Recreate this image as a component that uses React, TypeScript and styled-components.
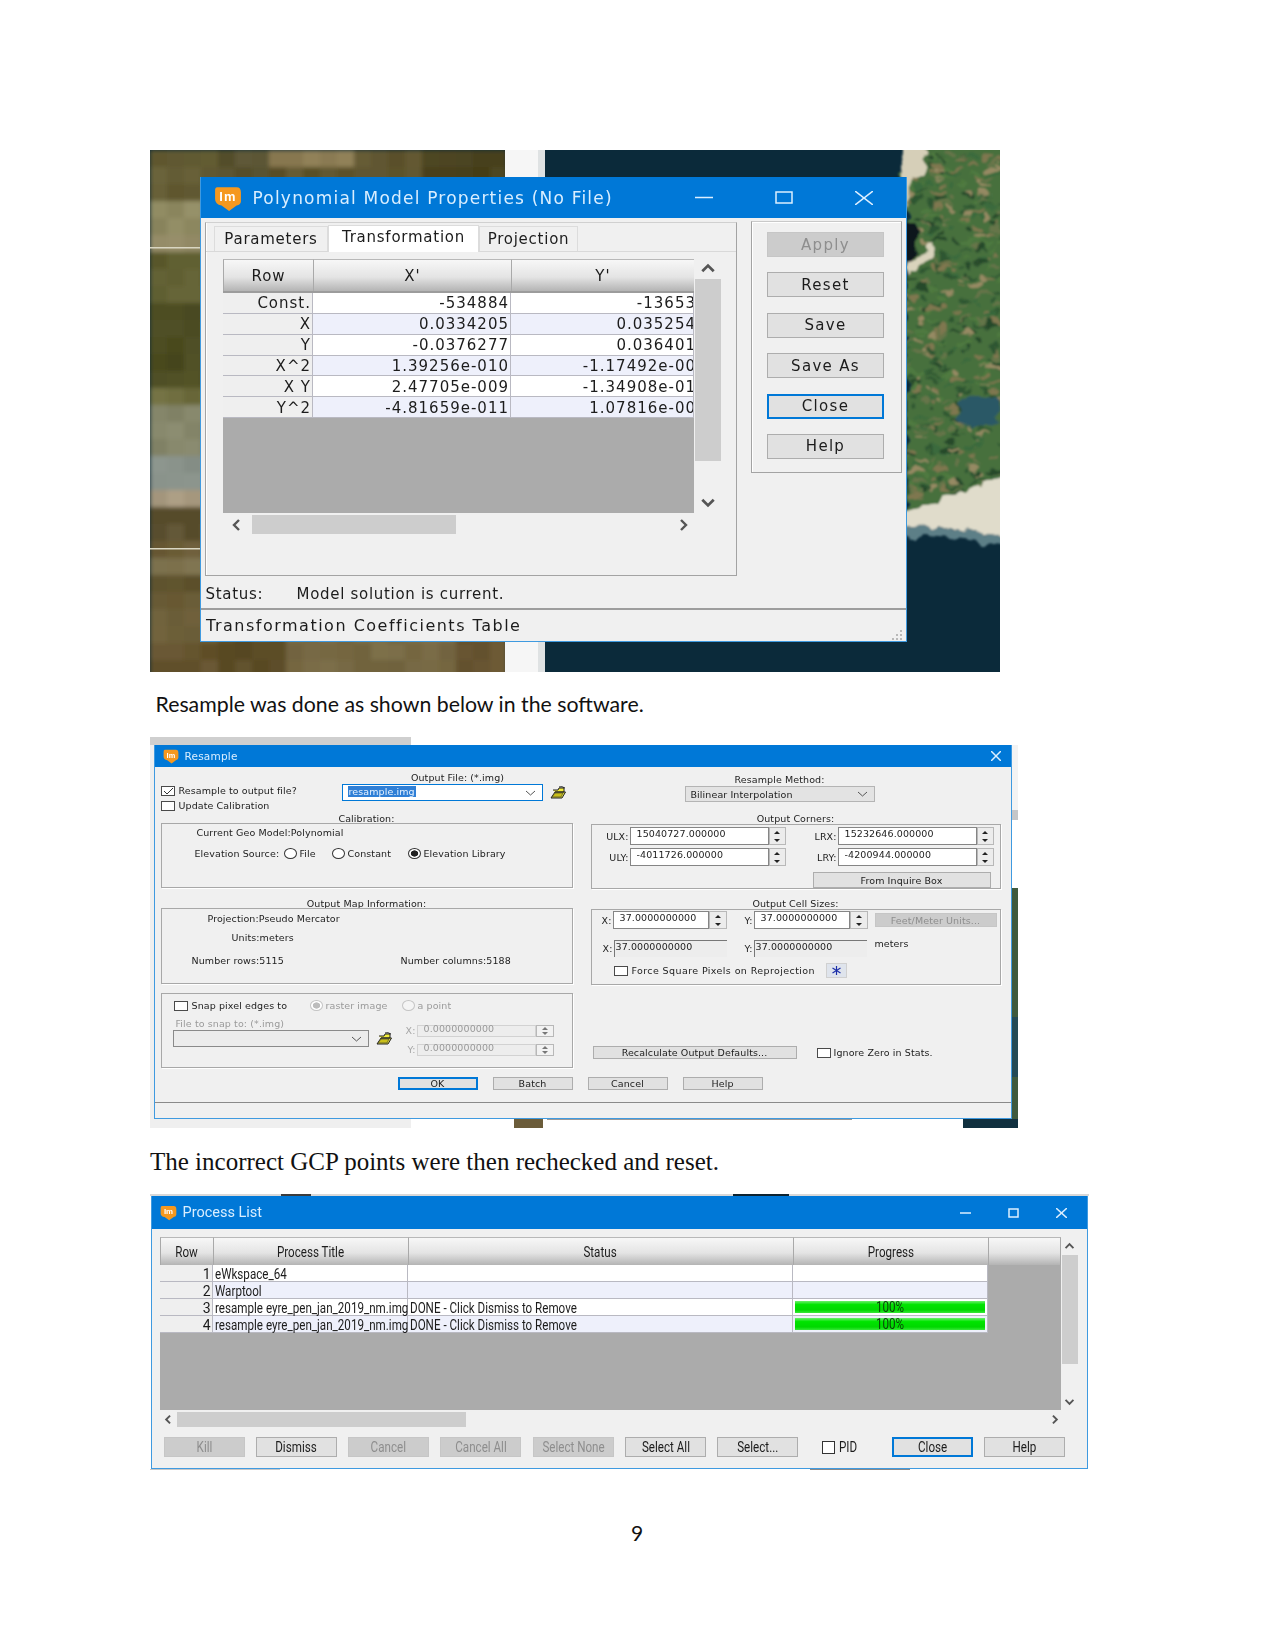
import React from 'react';
import styled, { createGlobalStyle, css } from 'styled-components';

const GlobalStyle = createGlobalStyle`
  html, body {
    margin: 0;
    padding: 0;
    background: #fff;
  }
  * {
    box-sizing: border-box;
  }
`;

const TITLE_BLUE = '#0078d7';
const FACE = '#f0f0f0';
const GRID_GRAY = '#ababab';
const THUMB = '#cdcdcd';
const ALT_ROW = '#eef0fb';

/* ---------- little drawings ---------- */

const ImLogo = ({ size }: { size: number }) => (
  <svg width={size} height={size} viewBox="0 0 26 26" style={{ flex: 'none' }}>
    <path d="M3 3 H21 Q25 3 25 8 V16 Q25 19 21 20 L14 25 L7 20 Q1 19 1 14 V6 Q1 3 3 3 Z" fill="#f5981f" />
    <text x="13" y="16" textAnchor="middle" fontFamily="'Liberation Sans', sans-serif" fontSize="12" fontWeight="700" fill="#fff">
      Im
    </text>
  </svg>
);

const WinGlyph = ({ kind, w, h }: { kind: 'min' | 'max' | 'close'; w: number; h: number }) => (
  <svg width={w} height={h} viewBox={`0 0 ${w} ${h}`} fill="none" stroke="#dcefff" strokeWidth="1.5">
    {kind === 'min' && <line x1="0" y1={h / 2} x2={w} y2={h / 2} />}
    {kind === 'max' && <rect x="1" y="1" width={w - 2} height={h - 2} />}
    {kind === 'close' && (
      <>
        <line x1="0" y1="0" x2={w} y2={h} />
        <line x1={w} y1="0" x2="0" y2={h} />
      </>
    )}
  </svg>
);

const Chevron = ({ dir, size = 14 }: { dir: 'up' | 'down' | 'left' | 'right'; size?: number }) => {
  const points = {
    up: '2,9 7,4 12,9',
    down: '2,5 7,10 12,5',
    left: '9,2 4,7 9,12',
    right: '5,2 10,7 5,12',
  }[dir];
  return (
    <svg width={size} height={size} viewBox="0 0 14 14" fill="none" stroke="#555" strokeWidth="2.4">
      <polyline points={points} />
    </svg>
  );
};

const Caret = ({ color = '#555' }: { color?: string }) => (
  <svg width="11" height="6" viewBox="0 0 11 6" fill="none" stroke={color} strokeWidth="1">
    <polyline points="1,1 5.5,5 10,1" />
  </svg>
);

const Folder = () => (
  <svg width="16" height="13" viewBox="0 0 16 13" style={{ flex: 'none' }}>
    <path d="M3 4 H8 L9 2 H14 V6 H5 L1 12 H12 L15.5 6 H5" fill="#f4ee3a" stroke="#222" strokeWidth="1" />
    <path d="M2 11 L5 7 H13 L11 11 Z" fill="#c9bf1a" stroke="#333" strokeWidth="0.6" />
    <path d="M9 1 Q12 0 15 2" fill="none" stroke="#222" strokeWidth="1" />
  </svg>
);

const Star = () => (
  <svg width="11" height="11" viewBox="0 0 11 11" stroke="#1c2fa8" strokeWidth="1.2">
    <line x1="5.5" y1="1" x2="5.5" y2="10" />
    <line x1="1.5" y1="3" x2="9.5" y2="8" />
    <line x1="9.5" y1="3" x2="1.5" y2="8" />
  </svg>
);

const Grip = () => (
  <svg width="14" height="12" viewBox="0 0 14 12" fill="#b9b9b9">
    <rect x="10" y="1" width="2" height="2" />
    <rect x="6" y="5" width="2" height="2" />
    <rect x="10" y="5" width="2" height="2" />
    <rect x="2" y="9" width="2" height="2" />
    <rect x="6" y="9" width="2" height="2" />
    <rect x="10" y="9" width="2" height="2" />
  </svg>
);

/* ---------- satellite pictures behind the windows ---------- */

const rng = (seed: number) => () => {
  seed = (seed * 16807) % 2147483647;
  return seed / 2147483647;
};

const LEFT_BANDS: [number, string][] = [
  [40, '#655e36'], [75, '#8f8a62'], [100, '#938a66'], [150, '#5f5e30'], [230, '#4c4c22'],
  [250, '#6e6d3e'], [290, '#85866a'], [325, '#89928a'], [350, '#a89a80'], [375, '#5d5232'],
  [395, '#6a5b36'], [420, '#7f7450'], [440, '#5c4f2a'], [490, '#6c5e38'], [522, '#64532e'],
];

const shade = (hex: string, d: number) => {
  const n = parseInt(hex.slice(1), 16);
  const c = (v: number) => Math.max(0, Math.min(255, v + d));
  return `rgb(${c(n >> 16)},${c((n >> 8) & 255)},${c(n & 255)})`;
};

const Mosaic = () => {
  const r = rng(77);
  const cells: React.ReactElement[] = [];
  const B = 17;
  for (let y = 0; y < 522; y += B) {
    for (let x = 0; x < 355; x += B) {
      const top = y < 27;
      const bottom = y >= 476;
      if (!top && !bottom && x > 51) continue;
      let base = (LEFT_BANDS.find(b => y < b[0]) as [number, string])[1];
      if (top && x > 51) base = x < 115 ? '#5a5432' : x < 190 && y < 12 ? '#8a7a52' : x < 260 ? '#5f552e' : '#4c4420';
      if (bottom && x > 51) base = x < 130 ? '#5c4d28' : x < 290 ? '#776944' : '#66532f';
      const d = Math.round((r() - 0.5) * 14);
      cells.push(<rect key={`${x}-${y}`} x={x} y={y} width={B} height={B} fill={shade(base, d)} />);
    }
  }
  return <g>{cells}</g>;
};

const CoastSpots = () => {
  const r = rng(4242);
  const spots: React.ReactElement[] = [];
  const tones = ['#7f7750', '#2f5632', '#4f7a3f', '#968a64', '#3a6a3c', '#66754a', '#27482c'];
  for (let i = 0; i < 520; i++) {
    const y = r() * 345;
    spots.push(
      <ellipse
        key={i}
        cx={752 + r() * 98}
        cy={y}
        rx={1.5 + r() * 6}
        ry={0.8 + r() * 2.6}
        fill={tones[Math.floor(r() * tones.length)]}
      />,
    );
  }
  return <g>{spots}</g>;
};

const SatelliteBackdrop = () => (
  <BackdropSvg viewBox="0 0 850 522" width="850" height="522">
    <defs>
      <filter id="soft"><feGaussianBlur stdDeviation="2" /></filter>
      <filter id="rough" x="0" y="0" width="100%" height="100%">
        <feTurbulence type="fractalNoise" baseFrequency="0.07" numOctaves="2" seed="5" result="noise" />
        <feDisplacementMap in="SourceGraphic" in2="noise" scale="16" xChannelSelector="R" yChannelSelector="G" />
        <feGaussianBlur stdDeviation="0.9" />
      </filter>
      <clipPath id="shot"><rect width="850" height="522" /></clipPath>
    </defs>
    <rect width="850" height="522" fill="#0b2a3a" />
    <g clipPath="url(#shot)">
      <g filter="url(#soft)"><Mosaic /></g>
    </g>
    <rect x="355" width="33" height="522" fill="#f6f6f6" />
    <rect x="388" width="7" height="522" fill="#dfe2e3" />
    <rect y="97" width="50" height="1.5" fill="#d9d6c2" />
    <rect y="398" width="50" height="1.5" fill="#d9d6c2" />
    <g clipPath="url(#shot)">
      <g filter="url(#rough)">
        <path d="M750 -20 H880 V330 Q800 350 757 362 V60 Z" fill="#46703e" />
        <CoastSpots />
        <path d="M748 -20 L772 -20 L776 25 L760 27 L757 60 Z" fill="#d6cfb8" />
        <ellipse cx="760" cy="92" rx="7" ry="20" fill="#08171f" />
        <path d="M757 112 Q772 105 782 90 L786 97 Q772 118 757 124 Z" fill="#d9d3bc" />
        <ellipse cx="828" cy="262" rx="22" ry="16" fill="#2c5866" />
        <path d="M750 362 Q800 350 880 315 V395 Q810 372 750 378 Z" fill="#e0dccb" />
        <path d="M750 378 Q810 372 880 395 V405 Q810 384 750 386 Z" fill="#5d7f87" />
      </g>
    </g>
  </BackdropSvg>
);

const BackdropSvg = styled.svg`
  position: absolute;
  inset: 0;
  display: block;
`;

const ResampleBackdrop = () => (
  <BackdropSvg viewBox="0 0 868 391" width="868" height="391">
    <rect y="0" width="261" height="391" fill="#efefef" />
    <rect y="0" width="261" height="8" fill="#cfcfcf" />
    <rect x="858" y="8" width="10" height="65" fill="#f3f3f3" />
    <rect x="858" y="73" width="10" height="10" fill="#c4c6c8" />
    <rect x="862" y="151" width="6" height="235" fill="#3f5a3d" />
    <rect x="862" y="280" width="6" height="60" fill="#244a55" />
    <rect x="364" y="382" width="29" height="9" fill="#6b5c3a" />
    <rect x="397" y="382" width="305" height="1" fill="#999" />
    <rect x="813" y="382" width="55" height="9" fill="#10303f" />
  </BackdropSvg>
);

const ProcessBackdrop = () => (
  <BackdropSvg viewBox="0 0 939 276" width="939" height="276">
    <rect x="0" y="0" width="939" height="2" fill="#d8d8d8" />
    <rect x="131" y="0" width="30" height="2" fill="#3c3c3c" />
    <rect x="583" y="0" width="56" height="2" fill="#0d2330" />
    <rect x="0" y="275" width="130" height="1" fill="#c8c8c8" />
    <rect x="660" y="275" width="100" height="1" fill="#888" />
  </BackdropSvg>
);

/* ---------- page ---------- */

const Page = styled.div`
  width: 1275px;
  height: 1651px;
  padding: 150px 0 0 150px;
  overflow: hidden;
`;

const Shot = styled.div<{ $w: number; $h: number; $pad: string }>`
  position: relative;
  width: ${p => p.$w}px;
  height: ${p => p.$h}px;
  padding: ${p => p.$pad};
`;

const Caption = styled.p`
  margin: 0;
  height: 65px;
  padding: 18px 0 0 5.5px;
  font-family: Lato, "Liberation Sans", sans-serif;
  font-size: 21.3px;
  line-height: 28px;
  color: #111;
`;

const SerifCaption = styled.p`
  margin: 0;
  height: 66px;
  padding: 18px 0 0;
  font-family: "Liberation Serif", serif;
  font-size: 25px;
  line-height: 32px;
  color: #111;
`;

const PageNumber = styled.div`
  width: 974px;
  margin-top: 51px;
  text-align: center;
  font-family: Lato, "Liberation Sans", sans-serif;
  font-size: 21px;
  line-height: 24px;
  color: #111;
`;

/* ---------- shared window chrome ---------- */

const Win = styled.div<{ $w: number; $h: number; $font: string; $blur: number }>`
  position: relative;
  width: ${p => p.$w}px;
  height: ${p => p.$h}px;
  display: flex;
  flex-direction: column;
  background: ${FACE};
  border: 1.5px solid #3f9ae0;
  border-top: 0;
  color: #1c1c1c;
  font-family: ${p => p.$font};
  filter: blur(${p => p.$blur}px);
  overflow: hidden;
`;

const TitleBar = styled.div<{ $h: number; $pad: number; $gap: number; $size: number; $ls?: number }>`
  flex: none;
  height: ${p => p.$h}px;
  display: flex;
  align-items: center;
  gap: ${p => p.$gap}px;
  padding-left: ${p => p.$pad}px;
  margin: 0 -1.5px;
  background: ${TITLE_BLUE};
  color: #d9eeff;
  font-size: ${p => p.$size}px;
  letter-spacing: ${p => p.$ls ?? 0}px;
  white-space: nowrap;
`;

const Controls = styled.div<{ $gap: number; $right: number }>`
  margin-left: auto;
  display: flex;
  align-items: center;
  gap: ${p => p.$gap}px;
  padding-right: ${p => p.$right}px;
`;

const HeadCell = styled.div<{ $w: number }>`
  flex: none;
  width: ${p => p.$w}px;
  display: flex;
  align-items: center;
  justify-content: center;
  background: linear-gradient(#f7f7f7, #e4e4e4 55%, #b4b4b4);
  border-left: 1px solid #a9a9a9;
  border-top: 1px solid #b8b8b8;
`;

const GridRow = styled.div<{ $h: number; $w?: number }>`
  display: flex;
  height: ${p => p.$h}px;
  width: ${p => (p.$w ? `${p.$w}px` : 'auto')};
  border-bottom: 1px solid #b9b9c2;
`;

const BodyCell = styled.div<{ $w: number; $kind: 'label' | 'plain' | 'alt'; $align?: 'left' | 'right' }>`
  flex: none;
  width: ${p => p.$w}px;
  display: flex;
  align-items: center;
  justify-content: ${p => (p.$align === 'left' ? 'flex-start' : 'flex-end')};
  padding: 1px 1px 0 2px;
  overflow: hidden;
  white-space: nowrap;
  border-right: 1px solid #b9b9c2;
  background: ${p => (p.$kind === 'label' ? '#efefef' : p.$kind === 'alt' ? ALT_ROW : '#fff')};
`;

const ClippedValue = styled.span`
  margin-right: -4px;
`;

const HThumb = styled.div<{ $w: number; $h: number; $ml: number }>`
  width: ${p => p.$w}px;
  height: ${p => p.$h}px;
  margin-left: ${p => p.$ml}px;
  background: ${THUMB};
`;

/* ---------- Polynomial Model Properties ---------- */

const PolyBody = styled.div`
  flex: none;
  display: flex;
  gap: 14px;
  padding: 3px 0 0 4px;
  height: 356px;
  font-size: 15px;
  letter-spacing: 1px;
`;

const TabPanel = styled.div`
  width: 532px;
  height: 354px;
  margin-top: 1px;
  border: 1px solid #a3a3a3;
  border-top-color: #d0d0d0;
  box-shadow: inset 1px 0 0 #fff;
`;

const TabStrip = styled.div`
  display: flex;
  align-items: flex-end;
  height: 29px;
  padding-left: 8px;
  border-bottom: 1px solid #d9d9d9;
`;

const Tab = styled.div<{ $w: number; $active?: boolean }>`
  width: ${p => p.$w}px;
  display: flex;
  justify-content: center;
  align-items: center;
  height: ${p => (p.$active ? 27 : 25)}px;
  padding-bottom: ${p => (p.$active ? 4 : 0)}px;
  background: ${p => (p.$active ? '#fff' : FACE)};
  border: 1px solid #dcdcdc;
  border-bottom: 0;
  letter-spacing: 0.75px;
  margin-bottom: ${p => (p.$active ? -1 : 0)}px;
`;

const PolyTableRow = styled.div`
  display: flex;
  margin: 7px 0 0 17px;
`;

const PolyTable = styled.div`
  width: 471px;
  height: 254px;
  background: ${GRID_GRAY};
  overflow: hidden;
`;

const PolyHead = styled.div`
  display: flex;
  height: 34px;
  border-bottom: 2px solid #9c9c9c;
`;

const VScroll = styled.div<{ $w: number; $h: number; $slotTop: number; $thumb: number; $endGap: number }>`
  flex: none;
  width: ${p => p.$w}px;
  height: ${p => p.$h}px;
  margin-left: 1px;
  display: grid;
  grid-template-rows: ${p => p.$slotTop}px ${p => p.$thumb}px 1fr;
  justify-items: center;
  align-items: center;

  & > svg:last-child {
    align-self: end;
    margin-bottom: ${p => p.$endGap}px;
  }
`;

const VThumb = styled.div`
  width: 100%;
  height: 100%;
  background: ${THUMB};
`;

const HScrollRow = styled.div<{ $left: number; $w: number; $h: number; $top: number }>`
  display: flex;
  align-items: center;
  width: ${p => p.$w}px;
  height: ${p => p.$h}px;
  margin: ${p => p.$top}px 0 0 ${p => p.$left}px;
`;

const RightArrow = styled.div`
  margin-left: auto;
  display: flex;
`;

const ActionPanel = styled.div`
  width: 151px;
  height: 252px;
  padding: 10px 0 0 15px;
  display: flex;
  flex-direction: column;
  gap: 15.4px;
  border: 1px solid #a3a3a3;
  border-top-color: #c9c9c9;
  box-shadow: inset 1px 1px 0 #fff;
`;

const buttonBase = css<{ $disabled?: boolean; $primary?: boolean }>`
  flex: none;
  display: flex;
  align-items: center;
  justify-content: center;
  white-space: nowrap;
  background: ${p => (p.$disabled ? '#cccccc' : '#e1e1e1')};
  color: ${p => (p.$disabled ? '#8e8e8e' : 'inherit')};
  border: ${p => (p.$primary ? `2px solid ${TITLE_BLUE}` : p.$disabled ? '1px solid #c6c6c6' : '1px solid #adadad')};
`;

const PolyButton = styled.div<{ $disabled?: boolean; $primary?: boolean }>`
  ${buttonBase}
  width: 117px;
  height: 25px;
  letter-spacing: 1.3px;
`;

const StatusRow = styled.div`
  flex: none;
  display: flex;
  align-items: center;
  height: 36px;
  padding: 6px 0 0 6px;
  border-bottom: 2px solid #9d9d9d;
  margin: 0 -1.5px;
  letter-spacing: 0.7px;
  font-size: 15px;
`;

const StatusLabel = styled.span`
  width: 91px;
`;

const FootRow = styled.div`
  flex: 1;
  display: flex;
  align-items: center;
  justify-content: space-between;
  padding: 0 2px 0 5px;
  font-size: 16px;
  letter-spacing: 1.5px;
`;

const GripSlot = styled.div`
  align-self: flex-end;
  display: flex;
`;

const POLY_ROWS = [
  ['Const.', '-534884', '-13653'],
  ['X', '0.0334205', '0.035254'],
  ['Y', '-0.0376277', '0.036401'],
  ['X^2', '1.39256e-010', '-1.17492e-00'],
  ['X Y', '2.47705e-009', '-1.34908e-01'],
  ['Y^2', '-4.81659e-011', '1.07816e-00'],
];

const PolyWindow = () => (
  <Win $w={707} $h={465} $font={`"DejaVu Sans", sans-serif`} $blur={0.5}>
    <TitleBar $h={41} $pad={14} $gap={11} $size={17} $ls={1.2}>
      <ImLogo size={28} />
      Polynomial Model Properties (No File)
      <Controls $gap={62} $right={35}>
        <WinGlyph kind="min" w={18} h={13} />
        <WinGlyph kind="max" w={18} h={13} />
        <WinGlyph kind="close" w={18} h={14} />
      </Controls>
    </TitleBar>
    <PolyBody>
      <TabPanel>
        <TabStrip>
          <Tab $w={114}>Parameters</Tab>
          <Tab $w={151} $active>Transformation</Tab>
          <Tab $w={99}>Projection</Tab>
        </TabStrip>
        <PolyTableRow>
          <PolyTable>
            <PolyHead>
              <HeadCell $w={90}>Row</HeadCell>
              <HeadCell $w={198}>X'</HeadCell>
              <HeadCell $w={183}>Y'</HeadCell>
            </PolyHead>
            {POLY_ROWS.map((row, i) => (
              <GridRow key={row[0]} $h={20.85}>
                <BodyCell $w={90} $kind="label">{row[0]}</BodyCell>
                <BodyCell $w={198} $kind={i % 2 ? 'alt' : 'plain'}>{row[1]}</BodyCell>
                <BodyCell $w={183} $kind={i % 2 ? 'alt' : 'plain'}>
                  <ClippedValue>{row[2]}</ClippedValue>
                </BodyCell>
              </GridRow>
            ))}
          </PolyTable>
          <VScroll $w={26} $h={254} $slotTop={20} $thumb={182} $endGap={3}>
            <Chevron dir="up" size={16} />
            <VThumb />
            <Chevron dir="down" size={16} />
          </VScroll>
        </PolyTableRow>
        <HScrollRow $left={24} $w={460} $h={19} $top={2}>
          <Chevron dir="left" size={14} />
          <HThumb $w={204} $h={19} $ml={8} />
          <RightArrow>
            <Chevron dir="right" size={14} />
          </RightArrow>
        </HScrollRow>
      </TabPanel>
      <ActionPanel>
        <PolyButton $disabled>Apply</PolyButton>
        <PolyButton>Reset</PolyButton>
        <PolyButton>Save</PolyButton>
        <PolyButton>Save As</PolyButton>
        <PolyButton $primary>Close</PolyButton>
        <PolyButton>Help</PolyButton>
      </ActionPanel>
    </PolyBody>
    <StatusRow>
      <StatusLabel>Status:</StatusLabel>
      Model solution is current.
    </StatusRow>
    <FootRow>
      Transformation Coefficients Table
      <GripSlot><Grip /></GripSlot>
    </FootRow>
  </Win>
);

/* ---------- Resample ---------- */

const ResampleColumns = styled.div`
  flex: none;
  display: grid;
  grid-template-columns: 412px 410px;
  column-gap: 18px;
  padding-left: 5.5px;
  font-size: 9.5px;
  line-height: 13px;
  letter-spacing: 0.1px;
`;

const Column = styled.div`
  display: flex;
  flex-direction: column;
`;

const TopBlock = styled.div`
  display: flex;
  height: 48px;
`;

const CheckStack = styled.div`
  width: 181px;
  padding-top: 17px;
  display: flex;
  flex-direction: column;
  gap: 2px;
`;

const CheckLine = styled.div`
  display: flex;
  align-items: center;
  gap: 4px;
  height: 13px;
  white-space: nowrap;
`;

const Box = styled.span<{ $gapAfter?: number; $gapBefore?: number }>`
  flex: none;
  position: relative;
  display: inline-block;
  width: 14px;
  height: 10px;
  margin: 0 ${p => p.$gapAfter ?? 0}px 0 ${p => p.$gapBefore ?? 0}px;
  background: #fff;
  border: 1px solid #4a4a4a;
`;

const Tick = styled.svg`
  position: absolute;
  left: 1px;
  top: 0;
`;

const OutputStack = styled.div`
  padding-top: 4px;
  width: 228px;
`;

const CenterText = styled.div<{ $w: number; $ml?: number; $mt?: number }>`
  width: ${p => p.$w}px;
  margin: ${p => p.$mt ?? 0}px 0 0 ${p => p.$ml ?? 0}px;
  text-align: center;
  white-space: nowrap;
`;

const ComboRow = styled.div<{ $ml?: number; $mt?: number }>`
  display: flex;
  align-items: center;
  gap: 7px;
  margin: ${p => p.$mt ?? 0}px 0 0 ${p => p.$ml ?? 0}px;
`;

const Combo = styled.div<{ $w: number; $look: 'focus' | 'gray' | 'blank' }>`
  flex: none;
  width: ${p => p.$w}px;
  height: ${p => (p.$look === 'gray' ? 16 : 17)}px;
  display: flex;
  align-items: center;
  justify-content: space-between;
  padding: 0 6px 0 5px;
  white-space: nowrap;
  border: 1px solid ${p => (p.$look === 'focus' ? TITLE_BLUE : p.$look === 'gray' ? '#b4b4b4' : '#8a8a8a')};
  background: ${p => (p.$look === 'gray' ? '#e3e3e3' : p.$look === 'blank' ? '#ececec' : '#fff')};
`;

const Selected = styled.span`
  background: #2f7fd6;
  color: #e6f2ff;
  margin-top: -3px;
  line-height: 11px;
  padding: 0 1px;
`;

const GroupTitle = styled.div<{ $mt?: number }>`
  height: 8px;
  line-height: 8px;
  margin-top: ${p => p.$mt ?? 0}px;
  text-align: center;
  white-space: nowrap;
`;

const Group = styled.div<{ $h: number; $mt?: number; $pad?: string }>`
  height: ${p => p.$h}px;
  margin-top: ${p => p.$mt ?? 0}px;
  padding: ${p => p.$pad ?? '0'};
  border: 1px solid #a8a8a8;
  box-shadow: 1px 1px 0 #fff;
`;

const Line = styled.div<{ $mt?: number; $ml?: number; $muted?: boolean }>`
  display: flex;
  align-items: center;
  height: 13px;
  margin: ${p => p.$mt ?? 0}px 0 0 ${p => p.$ml ?? 0}px;
  white-space: nowrap;
  color: ${p => (p.$muted ? '#9a9a9a' : 'inherit')};
`;

const Slot = styled.span<{ $w: number; $muted?: boolean; $ml?: number; $up?: number; $ls?: number }>`
  flex: none;
  display: inline-flex;
  align-items: center;
  width: ${p => p.$w}px;
  margin: ${p => -(p.$up ?? 0)}px 0 0 ${p => p.$ml ?? 0}px;
  color: ${p => (p.$muted ? '#9a9a9a' : 'inherit')};
  letter-spacing: ${p => p.$ls ?? 0.1}px;
  white-space: nowrap;
`;

const Radio = styled.span<{ $on?: boolean; $muted?: boolean }>`
  flex: none;
  display: inline-block;
  width: 13px;
  height: 11px;
  margin-right: 3px;
  border-radius: 50%;
  border: 1px solid ${p => (p.$muted ? '#c4c4c4' : '#333')};
  background: ${p =>
    p.$on
      ? `radial-gradient(ellipse at center, ${p.$muted ? '#bdbdbd' : '#222'} 45%, #fff 52%)`
      : p.$muted
        ? '#f4f4f4'
        : '#fff'};
`;

const SnapArea = styled.div`
  display: flex;
  margin: 5px 0 0 11px;
`;

const SnapLeft = styled.div`
  width: 233px;
`;

const SnapRight = styled.div`
  padding-top: 7px;
  display: flex;
  flex-direction: column;
  gap: 6px;
`;

const Pair = styled.div`
  display: flex;
  align-items: center;
`;

const FieldLabel = styled.span<{ $w: number; $muted?: boolean }>`
  flex: none;
  width: ${p => p.$w}px;
  text-align: right;
  color: ${p => (p.$muted ? '#a6a6a6' : 'inherit')};
  white-space: nowrap;
  padding-right: 1px;
`;

const Input = styled.div<{ $w: number; $h: number; $look?: 'edit' | 'read' | 'off' }>`
  flex: none;
  width: ${p => p.$w}px;
  height: ${p => p.$h}px;
  line-height: ${p => p.$h - 6}px;
  padding: 0 0 0 6px;
  white-space: nowrap;
  background: ${p => (p.$look === 'read' || p.$look === 'off' ? '#ededed' : '#fff')};
  color: ${p => (p.$look === 'off' ? '#9a9a9a' : 'inherit')};
  ${p =>
    p.$look === 'read'
      ? css`
          padding-left: 1px;
          border-left: 1px solid #777;
          border-top: 1px solid #777;
        `
      : p.$look === 'off'
        ? css`
            border: 1px solid #d2d2d2;
          `
        : css`
            border: 1px solid #858585;
          `}
`;

const Spin = styled.div<{ $w: number; $h: number; $muted?: boolean }>`
  flex: none;
  width: ${p => p.$w}px;
  height: ${p => p.$h}px;
  display: flex;
  flex-direction: column;
  align-items: center;
  justify-content: space-around;
  background: ${p => (p.$muted ? '#f2f2f2' : '#ececec')};
  border: 1px solid #b8b8b8;
`;

const SpinUp = styled.span<{ $muted?: boolean }>`
  width: 0;
  height: 0;
  border-left: 3px solid transparent;
  border-right: 3px solid transparent;
  border-bottom: 3px solid ${p => (p.$muted ? '#777' : '#222')};
`;

const SpinDown = styled(SpinUp)`
  transform: rotate(180deg);
`;

const Spinner = ({ w, h, muted }: { w: number; h: number; muted?: boolean }) => (
  <Spin $w={w} $h={h} $muted={muted}>
    <SpinUp $muted={muted} />
    <SpinDown $muted={muted} />
  </Spin>
);

const SpinRow = styled.div<{ $mt?: number; $ml?: number }>`
  display: flex;
  align-items: center;
  margin: ${p => p.$mt ?? 0}px 0 0 ${p => p.$ml ?? 0}px;
`;

const SmallButton = styled.div<{ $w: number; $h: number; $ml?: number; $mt?: number; $disabled?: boolean; $primary?: boolean }>`
  ${buttonBase}
  width: ${p => p.$w}px;
  height: ${p => p.$h}px;
  margin: ${p => p.$mt ?? 0}px 0 0 ${p => p.$ml ?? 0}px;
`;

const StarButton = styled.div`
  flex: none;
  width: 21px;
  height: 15px;
  margin-left: 12px;
  display: flex;
  align-items: center;
  justify-content: center;
  background: #dfe4ec;
  border: 1px solid #d0d0d0;
`;

const DialogButtons = styled.div`
  flex: none;
  display: flex;
  gap: 10px;
  margin-top: 9px;
  padding-left: 242.5px;
  font-size: 9.5px;
  letter-spacing: 0.1px;
`;

const DialogDivider = styled.div`
  margin: 12px -1.5px 0;
  height: 1px;
  background: #8a8a8a;
`;

const CornerField = ({ label, value, first }: { label: string; value: string; first?: boolean }) => (
  <>
    <FieldLabel $w={first ? 38 : 52}>{label}</FieldLabel>
    <Input $w={139} $h={18}>{value}</Input>
    <Spinner w={17} h={18} />
  </>
);

const ResampleWindow = () => (
  <Win $w={858} $h={374} $font={`"DejaVu Sans", sans-serif`} $blur={0.3}>
    <TitleBar $h={22} $pad={9} $gap={6} $size={10.5} $ls={0.2}>
      <ImLogo size={16} />
      Resample
      <Controls $gap={0} $right={12}>
        <WinGlyph kind="close" w={10} h={10} />
      </Controls>
    </TitleBar>
    <ResampleColumns>
      <Column>
        <TopBlock>
          <CheckStack>
            <CheckLine>
              <Box>
                <Tick width="11" height="8" viewBox="0 0 11 8" fill="none" stroke="#333" strokeWidth="1">
                  <polyline points="1,4 4,7 10,1" />
                </Tick>
              </Box>
              Resample to output file?
            </CheckLine>
            <CheckLine>
              <Box />
              Update Calibration
            </CheckLine>
          </CheckStack>
          <OutputStack>
            <CenterText $w={232}>Output File: (*.img)</CenterText>
            <ComboRow>
              <Combo $w={201} $look="focus">
                <Selected>resample.img</Selected>
                <Caret />
              </Combo>
              <Folder />
            </ComboRow>
          </OutputStack>
        </TopBlock>
        <GroupTitle>Calibration:</GroupTitle>
        <Group $h={65} $pad="2px 0 0 0">
          <Line $ml={35}>Current Geo Model:Polynomial</Line>
          <Line $mt={8} $ml={33}>
            <Slot $w={89}>Elevation Source:</Slot>
            <Slot $w={48}><Radio />File</Slot>
            <Slot $w={76}><Radio />Constant</Slot>
            <Slot $w={100}><Radio $on />Elevation Library</Slot>
          </Line>
        </Group>
        <GroupTitle $mt={12}>Output Map Information:</GroupTitle>
        <Group $h={76} $pad="3px 0 0 0">
          <Line $ml={46}>Projection:Pseudo Mercator</Line>
          <Line $mt={6} $ml={70}>Units:meters</Line>
          <Line $mt={10} $ml={30}>
            <Slot $w={209}>Number rows:5115</Slot>
            Number columns:5188
          </Line>
        </Group>
        <Group $h={75} $mt={9} $pad="5px 0 0 0">
          <Line $ml={12}>
            <Slot $w={136}>
              <Box $gapAfter={4} />
              Snap pixel edges to
            </Slot>
            <Slot $w={92} $muted><Radio $on $muted />raster image</Slot>
            <Slot $w={60} $muted><Radio $muted />a point</Slot>
          </Line>
          <SnapArea>
            <SnapLeft>
              <Line $ml={3} $muted>File to snap to: (*.img)</Line>
              <ComboRow>
                <Combo $w={196} $look="blank">
                  <span />
                  <Caret />
                </Combo>
                <Folder />
              </ComboRow>
            </SnapLeft>
            <SnapRight>
              <Pair>
                <FieldLabel $w={11} $muted>X:</FieldLabel>
                <Input $w={119} $h={12} $look="off">0.0000000000</Input>
                <Spinner w={18} h={12} muted />
              </Pair>
              <Pair>
                <FieldLabel $w={11} $muted>Y:</FieldLabel>
                <Input $w={119} $h={12} $look="off">0.0000000000</Input>
                <Spinner w={18} h={12} muted />
              </Pair>
            </SnapRight>
          </SnapArea>
        </Group>
      </Column>
      <Column>
        <TopBlock>
          <div>
            <CenterText $w={190} $ml={94} $mt={6}>Resample Method:</CenterText>
            <ComboRow $ml={94}>
              <Combo $w={190} $look="gray">
                Bilinear Interpolation
                <Caret />
              </Combo>
            </ComboRow>
          </div>
        </TopBlock>
        <GroupTitle>Output Corners:</GroupTitle>
        <Group $h={65} $mt={1} $pad="2px 0 0 0">
          <SpinRow>
            <CornerField label="ULX:" value="15040727.000000" first />
            <CornerField label="LRX:" value="15232646.000000" />
          </SpinRow>
          <SpinRow $mt={3}>
            <CornerField label="ULY:" value="-4011726.000000" first />
            <CornerField label="LRY:" value="-4200944.000000" />
          </SpinRow>
          <SmallButton $w={178} $h={16} $ml={221} $mt={6}>From Inquire Box</SmallButton>
        </Group>
        <GroupTitle $mt={11}>Output Cell Sizes:</GroupTitle>
        <Group $h={76} $mt={1} $pad="1px 0 0 0">
          <SpinRow>
            <FieldLabel $w={21}>X:</FieldLabel>
            <Input $w={96} $h={18}>37.0000000000</Input>
            <Spinner w={18} h={18} />
            <FieldLabel $w={27}>Y:</FieldLabel>
            <Input $w={96} $h={18}>37.0000000000</Input>
            <Spinner w={18} h={18} />
            <SmallButton $w={122} $h={14} $ml={7} $disabled>Feet/Meter Units...</SmallButton>
          </SpinRow>
          <SpinRow $mt={11}>
            <FieldLabel $w={22}>X:</FieldLabel>
            <Input $w={113} $h={17} $look="read">37.0000000000</Input>
            <FieldLabel $w={27}>Y:</FieldLabel>
            <Input $w={113} $h={17} $look="read">37.0000000000</Input>
            <Slot $w={40} $ml={8} $up={11}>meters</Slot>
          </SpinRow>
          <SpinRow $mt={6} $ml={22}>
            <Box />
            <Slot $w={182} $ml={4} $ls={0.4}>Force Square Pixels on Reprojection</Slot>
            <StarButton><Star /></StarButton>
          </SpinRow>
        </Group>
        <SpinRow $mt={61} $ml={2}>
          <SmallButton $w={204} $h={13}>Recalculate Output Defaults...</SmallButton>
          <Box $gapBefore={20} $gapAfter={3} />
          Ignore Zero in Stats.
        </SpinRow>
      </Column>
    </ResampleColumns>
    <DialogButtons>
      <SmallButton $w={80} $h={13} $primary>OK</SmallButton>
      <SmallButton $w={80} $h={13} $ml={5}>Batch</SmallButton>
      <SmallButton $w={80} $h={13} $ml={5}>Cancel</SmallButton>
      <SmallButton $w={80} $h={13} $ml={5}>Help</SmallButton>
    </DialogButtons>
    <DialogDivider />
  </Win>
);

/* ---------- Process List ---------- */

const ProcessBody = styled.div`
  padding: 8px 0 0 7.5px;
  font-size: 14px;
`;

// the capture is squashed sideways, Roboto is too wide without this
const Squeeze = styled.span<{ $origin?: 'left' | 'center' | 'right' }>`
  flex: none;
  display: inline-block;
  transform: scaleX(0.83);
  transform-origin: ${p => p.$origin ?? 'center'} center;
`;

const ProcessTableRow = styled.div`
  display: flex;
`;

const ProcessTable = styled.div`
  width: 901px;
  height: 173px;
  background: ${GRID_GRAY};
  overflow: hidden;
`;

const ProcessHead = styled.div`
  display: flex;
  height: 28px;
  background: ${GRID_GRAY};
`;

const LastHead = styled(HeadCell)`
  border-right: 1px solid #a9a9a9;
`;

const ProcessCell = styled(BodyCell)`
  overflow: visible;
`;

const ProgressCell = styled(BodyCell)`
  padding: 2px 2px;
  justify-content: stretch;
`;

const ProgressBar = styled.div`
  width: 100%;
  height: 100%;
  display: flex;
  align-items: center;
  justify-content: center;
  background: linear-gradient(#6cf06c, #00e400 30%, #00d800 75%, #38e838);
  color: #0b3b0b;
`;

const ProcessButtons = styled.div`
  display: flex;
  gap: 11.3px;
  margin: 10px 0 0 4px;
`;

const ProcessButton = styled.div<{ $disabled?: boolean; $primary?: boolean }>`
  ${buttonBase}
  width: 81px;
  height: 20px;
`;

const PidSlot = styled.div`
  flex: none;
  width: 71px;
  padding-left: 12px;
  display: flex;
  align-items: center;
  gap: 4px;
`;

const PidBox = styled.span`
  width: 13px;
  height: 13px;
  background: #fff;
  border: 1px solid #333;
`;

const PROCESS_ROWS = [
  { n: '1', title: 'eWkspace_64', status: '', done: false },
  { n: '2', title: 'Warptool', status: '', done: false },
  { n: '3', title: 'resample eyre_pen_jan_2019_nm.img', status: 'DONE - Click Dismiss to Remove', done: true },
  { n: '4', title: 'resample eyre_pen_jan_2019_nm.img', status: 'DONE - Click Dismiss to Remove', done: true },
];

const PROCESS_BUTTONS_LEFT: [string, boolean][] = [
  ['Kill', true],
  ['Dismiss', false],
  ['Cancel', true],
  ['Cancel All', true],
  ['Select None', true],
  ['Select All', false],
  ['Select...', false],
];

const ProcessWindow = () => (
  <Win $w={937} $h={273} $font={`Roboto, "Liberation Sans", sans-serif`} $blur={0.4}>
    <TitleBar $h={33} $pad={9} $gap={6} $size={14.5}>
      <ImLogo size={17} />
      Process List
      <Controls $gap={37} $right={22}>
        <WinGlyph kind="min" w={11} h={10} />
        <WinGlyph kind="max" w={11} h={10} />
        <WinGlyph kind="close" w={11} h={10} />
      </Controls>
    </TitleBar>
    <ProcessBody>
      <ProcessTableRow>
        <ProcessTable>
          <ProcessHead>
            <HeadCell $w={53}><Squeeze>Row</Squeeze></HeadCell>
            <HeadCell $w={195}><Squeeze>Process Title</Squeeze></HeadCell>
            <HeadCell $w={385}><Squeeze>Status</Squeeze></HeadCell>
            <HeadCell $w={195}><Squeeze>Progress</Squeeze></HeadCell>
            <LastHead $w={73} />
          </ProcessHead>
          {PROCESS_ROWS.map((row, i) => {
            const tone = i % 2 ? 'alt' : 'plain';
            return (
              <GridRow key={row.n} $h={17} $w={828}>
                <BodyCell $w={53} $kind="label">{row.n}</BodyCell>
                <ProcessCell $w={195} $kind={tone} $align="left">
                  <Squeeze $origin="left">{row.title}</Squeeze>
                </ProcessCell>
                <ProcessCell $w={385} $kind={tone} $align="left">
                  <Squeeze $origin="left">{row.status}</Squeeze>
                </ProcessCell>
                {row.done ? (
                  <ProgressCell $w={195} $kind={tone}>
                    <ProgressBar><Squeeze>100%</Squeeze></ProgressBar>
                  </ProgressCell>
                ) : (
                  <BodyCell $w={195} $kind={tone} />
                )}
              </GridRow>
            );
          })}
        </ProcessTable>
        <VScroll $w={16} $h={173} $slotTop={18} $thumb={109} $endGap={3}>
          <Chevron dir="up" size={11} />
          <VThumb />
          <Chevron dir="down" size={11} />
        </VScroll>
      </ProcessTableRow>
      <HScrollRow $left={3} $w={897} $h={15} $top={2}>
        <Chevron dir="left" size={11} />
        <HThumb $w={289} $h={15} $ml={3} />
        <RightArrow>
          <Chevron dir="right" size={11} />
        </RightArrow>
      </HScrollRow>
      <ProcessButtons>
        {PROCESS_BUTTONS_LEFT.map(([label, off]) => (
          <ProcessButton key={label} $disabled={off}><Squeeze>{label}</Squeeze></ProcessButton>
        ))}
        <PidSlot>
          <PidBox />
          <Squeeze $origin="left">PID</Squeeze>
        </PidSlot>
        <ProcessButton $primary><Squeeze>Close</Squeeze></ProcessButton>
        <ProcessButton><Squeeze>Help</Squeeze></ProcessButton>
      </ProcessButtons>
    </ProcessBody>
  </Win>
);

export default function App() {
  return (
    <>
      <GlobalStyle />
      <Page>
        <Shot $w={850} $h={522} $pad="27px 0 0 50px">
          <SatelliteBackdrop />
          <PolyWindow />
        </Shot>
        <Caption>Resample was done as shown below in the software.</Caption>
        <Shot $w={868} $h={391} $pad="8px 0 0 4px">
          <ResampleBackdrop />
          <ResampleWindow />
        </Shot>
        <SerifCaption>The incorrect GCP points were then rechecked and reset.</SerifCaption>
        <Shot $w={939} $h={276} $pad="2px 0 0 1px">
          <ProcessBackdrop />
          <ProcessWindow />
        </Shot>
        <PageNumber>9</PageNumber>
      </Page>
    </>
  );
}
